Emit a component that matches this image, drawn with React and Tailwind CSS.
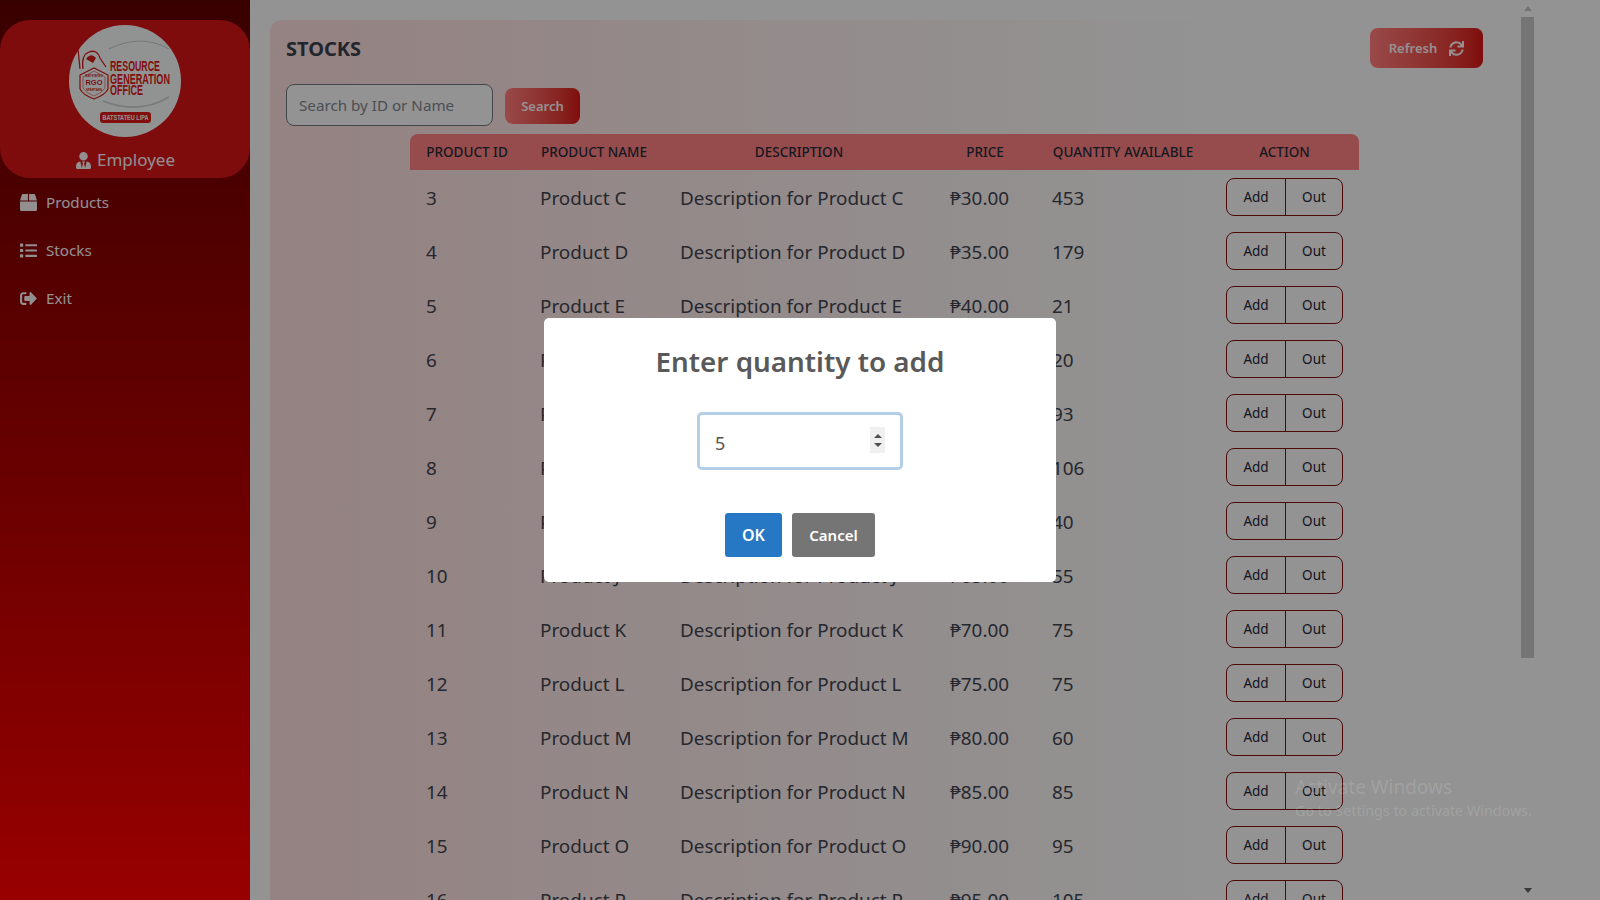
import { FaBox, FaList, FaSignOutAlt, FaSync, FaUserTie } from "react-icons/fa";

const products = [
  { id: 3, letter: "C", price: "30.00", qty: 453 },
  { id: 4, letter: "D", price: "35.00", qty: 179 },
  { id: 5, letter: "E", price: "40.00", qty: 21 },
  { id: 6, letter: "F", price: "45.00", qty: 20 },
  { id: 7, letter: "G", price: "50.00", qty: 93 },
  { id: 8, letter: "H", price: "55.00", qty: 106 },
  { id: 9, letter: "I", price: "60.00", qty: 40 },
  { id: 10, letter: "J", price: "65.00", qty: 55 },
  { id: 11, letter: "K", price: "70.00", qty: 75 },
  { id: 12, letter: "L", price: "75.00", qty: 75 },
  { id: 13, letter: "M", price: "80.00", qty: 60 },
  { id: 14, letter: "N", price: "85.00", qty: 85 },
  { id: 15, letter: "O", price: "90.00", qty: 95 },
  { id: 16, letter: "P", price: "95.00", qty: 105 },
];

function Logo() {
  return (
    <svg viewBox="0 0 112 112" className="h-[112px] w-[112px]">
      <circle cx="56" cy="56" r="56" fill="#f2f6f6" />
      <path d="M40 24 Q72 8 100 24" fill="none" stroke="#c4caca" strokeWidth="1.2" />
      <path d="M34 76 Q70 90 100 72" fill="none" stroke="#c4caca" strokeWidth="1.5" />
      {/* helmet and plume */}
      <path d="M9 24 L11 44 M14 44 Q12 30 20 27 Q28 24 31 33 L37 42" fill="none" stroke="#d01a1a" strokeWidth="1.3" />
      <path d="M17 34 Q22 27 27 33 L24 38 Z" fill="#d01a1a" />
      {/* shield */}
      <path d="M11 50 L25 43 L39 50 L39 64 Q36 70 25 74 Q14 70 11 64 Z" fill="#f2f6f6" stroke="#d01a1a" strokeWidth="1.2" />
      <path d="M14 52 L25 46 L36 52 L36 63 Q33 68 25 71 Q17 68 14 63 Z" fill="none" stroke="#d01a1a" strokeWidth="0.5" />
      <g fontFamily="Liberation Sans" fontWeight="700" fill="#c81a1a" textAnchor="middle">
        <text x="25" y="52" fontSize="3">BATSTATEU</text>
        <text x="25" y="60" fontSize="7.5">RGO</text>
        <text x="25" y="66" fontSize="3">SPARTANS</text>
      </g>
      <g fill="#d91818" fontFamily="Liberation Sans" fontWeight="700">
        <text x="41" y="46" fontSize="14" textLength="50" lengthAdjust="spacingAndGlyphs">RESOURCE</text>
        <text x="41" y="58.5" fontSize="14" textLength="60" lengthAdjust="spacingAndGlyphs">GENERATION</text>
        <text x="41" y="70" fontSize="14" textLength="33" lengthAdjust="spacingAndGlyphs">OFFICE</text>
      </g>
      <rect x="31" y="87" width="51" height="11" rx="3" fill="#d91818" />
      <text x="56.5" y="95" textAnchor="middle" fontSize="7.5" fontWeight="700" fontFamily="Liberation Sans" fill="#f2f6f6" textLength="46" lengthAdjust="spacingAndGlyphs">BATSTATEU LIPA</text>
    </svg>
  );
}

function NavItem({ icon, label }) {
  return (
    <div className="flex h-[48px] items-center gap-[10px] pl-[20px] text-[15.2px] text-[#f5eef2]">
      <span className="w-[16px] text-[17px]">{icon}</span>
      {label}
    </div>
  );
}

function Row({ p }) {
  return (
    <tr className="h-[54px] text-[18.9px] text-[#40444e]">
      <td className="pl-[16px] pt-[2px]">{p.id}</td>
      <td className="pl-[16px] pt-[2px]">Product {p.letter}</td>
      <td className="pl-[16px] pt-[2px]">Description for Product {p.letter}</td>
      <td className="pl-[16px] pt-[2px]">₱{p.price}</td>
      <td className="pl-[16px] pt-[2px]">{p.qty}</td>
      <td className="pl-[16px]">
        <div className="flex h-[38px] w-[117px] rounded-[8px] border border-[#7f1010] text-[13.5px] text-[#1c2538]">
          <span className="flex w-[59px] items-center justify-center border-r border-[#7f1010]">Add</span>
          <span className="flex flex-1 items-center justify-center">Out</span>
        </div>
      </td>
    </tr>
  );
}

export default function App() {
  return (
    <div className="relative flex h-[900px] w-[1600px] overflow-hidden bg-[#f5f5f5] font-['Noto_Sans',sans-serif]">
      <aside className="w-[250px] shrink-0 bg-gradient-to-b from-[#600000] to-[#ff0000] pt-[20px]">
        <div className="flex h-[158px] flex-col items-center rounded-[30px] bg-[#d21515] pt-[5px]">
          <Logo />
          <div className="mt-[11px] flex items-center gap-[5px] text-[17px] leading-[24px] text-[#f5eef2]">
            <FaUserTie className="text-[17px]" />
            Employee
          </div>
        </div>
        <nav>
          <NavItem icon={<FaBox />} label="Products" />
          <NavItem icon={<FaList />} label="Stocks" />
          <NavItem icon={<FaSignOutAlt />} label="Exit" />
        </nav>
      </aside>

      <main className="flex-1 overflow-hidden pl-[20px] pt-[20px]">
        <div className="h-[900px] rounded-t-[12px] bg-gradient-to-r from-[#f8d9d9] to-[#f5f5f5] to-[75%] pl-[16px] pr-[37px]">
          <div className="flex items-start justify-between pt-[8px]">
            <h1 className="pt-[6px] text-[20px] font-bold leading-[30px] text-[#3a3f4a]">STOCKS</h1>
            <button className="flex h-[40px] w-[113px] items-center justify-center gap-[12px] rounded-[8px] bg-gradient-to-r from-[#ff7b7b] to-[#d51414] pt-[1px] text-[13px] font-semibold text-[#fbeef2]">
              Refresh
              <FaSync className="text-[15px]" />
            </button>
          </div>
          <div className="mt-[16px] flex items-center gap-[12px]">
            <input
              readOnly
              placeholder="Search by ID or Name"
              className="h-[42px] w-[207px] rounded-[8px] border border-[#6f7680] bg-[#f5f5f5] px-[12px] text-[15.2px] placeholder:text-[#7d848c]"
            />
            <button className="mt-[2px] h-[36px] w-[75px] rounded-[8px] bg-gradient-to-r from-[#ff7b7b] to-[#d51414] pt-[1px] text-[13px] font-semibold text-[#fbeef2]">
              Search
            </button>
          </div>
          <table className="ml-[124px] mt-[8px] w-[949px] table-fixed border-collapse">
            <colgroup>
              <col className="w-[114px]" />
              <col className="w-[140px]" />
              <col className="w-[270px]" />
              <col className="w-[102px]" />
              <col className="w-[174px]" />
              <col className="w-[149px]" />
            </colgroup>
            <thead>
              <tr className="h-[36px] bg-[#fa7f7f] text-center text-[13.5px] text-[#262a38]">
                <th className="rounded-tl-[8px] font-medium">PRODUCT ID</th>
                <th className="font-medium">PRODUCT NAME</th>
                <th className="font-medium">DESCRIPTION</th>
                <th className="font-medium">PRICE</th>
                <th className="font-medium">QUANTITY AVAILABLE</th>
                <th className="rounded-tr-[8px] font-medium">ACTION</th>
              </tr>
            </thead>
            <tbody>
              {products.map((p) => (
                <Row key={p.id} p={p} />
              ))}
            </tbody>
          </table>
        </div>
      </main>

      {/* page scrollbar */}
      <div className="ml-[1px] mr-[66px] flex w-[13px] shrink-0 flex-col">
        <div className="flex h-[17px] items-center justify-center">
          <div className="h-0 w-0 border-x-[4px] border-b-[5px] border-x-transparent border-b-[#c0c0c0]" />
        </div>
        <div className="h-[641px] bg-[#c4c4c4]" />
        <div className="flex flex-1 items-end justify-center pb-[7px]">
          <div className="h-0 w-0 border-x-[4px] border-t-[5px] border-x-transparent border-t-[#606060]" />
        </div>
      </div>

      {/* sweetalert backdrop + dialog */}
      <div className="absolute inset-0 flex items-start justify-center bg-black/40 pt-[318px]">
        <div className="flex h-[264px] w-[512px] flex-col items-center rounded-[5px] bg-white">
          <h2 className="mt-[21px] text-[27.8px] font-semibold leading-[44px] text-[#595959]">Enter quantity to add</h2>
          <div className="relative mt-[29px] h-[58px] w-[206px] rounded-[5px] border-[3px] border-[#b3cfe8] bg-white">
            <input readOnly value="5" className="h-full w-full rounded-[3px] pl-[15px] pt-[4px] text-[18px] text-[#545454] outline-none" />
            <div className="absolute right-[15px] top-[12px] flex h-[26px] w-[15px] flex-col items-center justify-center gap-[5px] bg-[#f0f0f0]">
              <div className="h-0 w-0 border-x-[4px] border-b-[4px] border-x-transparent border-b-[#505050]" />
              <div className="h-0 w-0 border-x-[4px] border-t-[4px] border-x-transparent border-t-[#505050]" />
            </div>
          </div>
          <div className="mt-[43px] flex gap-[10px]">
            <button className="h-[44px] w-[57px] rounded-[3px] bg-[#2778c4] text-[16px] font-semibold text-white">OK</button>
            <button className="h-[44px] w-[83px] rounded-[3px] bg-[#757575] text-[15px] font-semibold text-white">Cancel</button>
          </div>
        </div>
      </div>

      {/* windows activation watermark */}
      <div className="absolute left-[1295px] top-[774px] text-white/15">
        <div className="text-[19px] leading-[27px]">Activate Windows</div>
        <div className="text-[14.3px] leading-[20px]">Go to Settings to activate Windows.</div>
      </div>
    </div>
  );
}
